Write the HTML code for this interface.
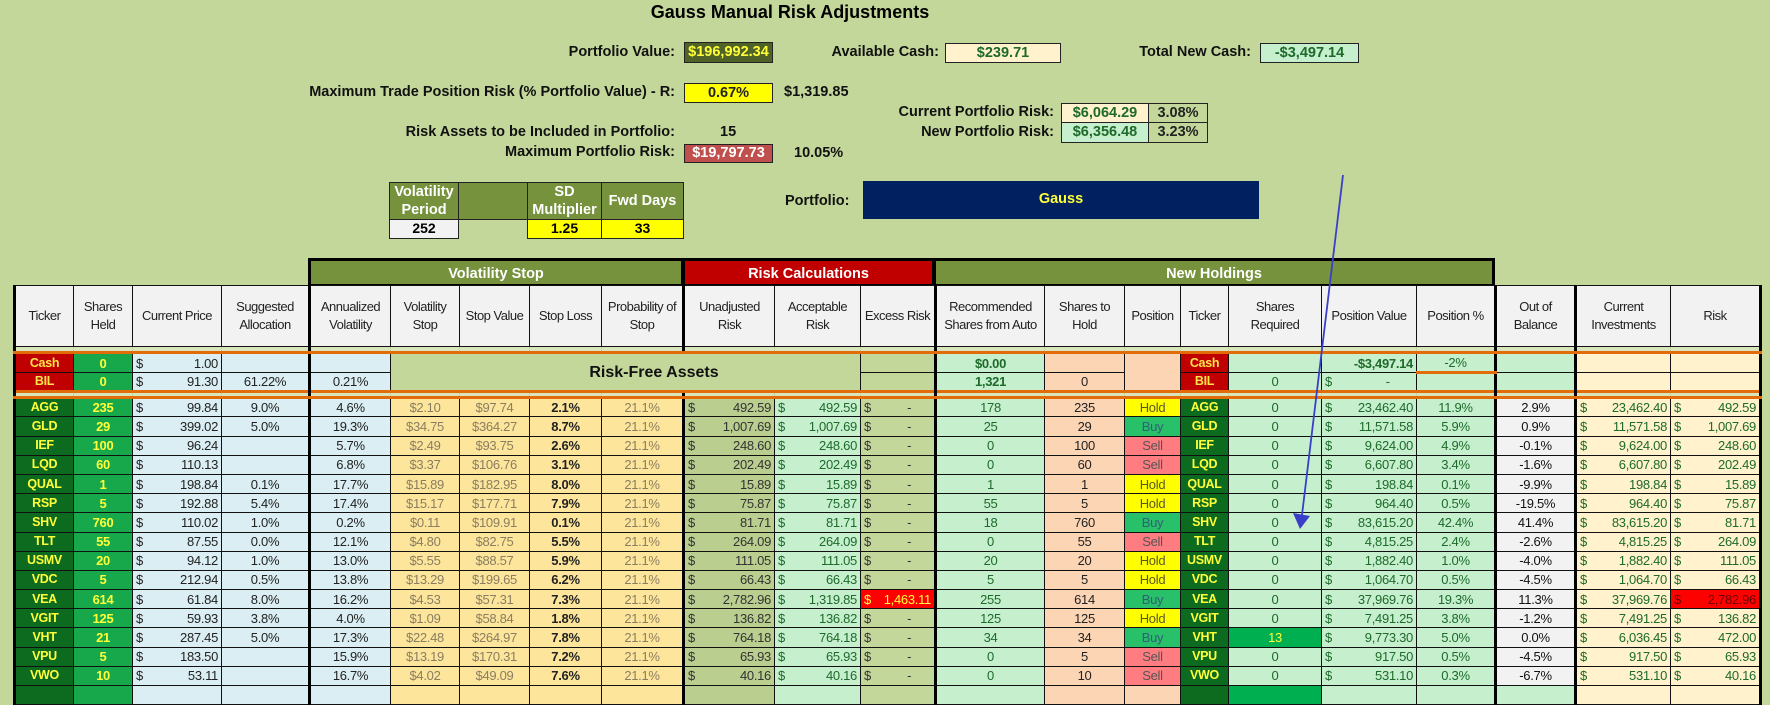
<!DOCTYPE html>
<html><head><meta charset="utf-8"><style>
*{box-sizing:border-box;margin:0;padding:0}
body{width:1770px;height:689px;overflow:hidden;background:#c4d79b;font-family:"Liberation Sans",sans-serif;position:relative}
.a{position:absolute;white-space:nowrap}
.lb{font-weight:bold;font-size:14.5px;color:#111;text-align:right}
.bx{border:1px solid #222;text-align:center;font-weight:bold;font-size:14.5px;line-height:19px}
table{position:absolute;left:13px;top:285px;border-collapse:collapse;table-layout:fixed;font-family:"Liberation Sans",sans-serif;font-size:13px;letter-spacing:-0.3px}
td{border:1px solid #111;text-align:center;white-space:nowrap;overflow:hidden;padding:0 3px;line-height:17px}
tr.h td{background:#f2f2f2;height:61px;line-height:18px;font-size:13px;letter-spacing:-0.5px;color:#222;padding:0 1px}
tr.r td{height:19.2px}
tr.s td{height:6px;background:#d8e4bc;border-top:none;border-bottom:3px solid #e26b0a;border-left-color:transparent;border-right-color:transparent}
td.tk{background:#0d6b1f;color:#ffff3a;font-weight:bold;font-size:12.5px;padding:0 1px}
td.tr{background:#c00000;color:#ffe54a;font-weight:bold;font-size:12.5px}
td.sh{background:#16a84a;color:#ffff3a;font-weight:bold}
td.lb2{background:#daeef3;color:#222}
td.or{background:#fde69c;color:#8a7d60}
td.orb{background:#fde69c;color:#222;font-weight:bold}
td.ol{background:#b9ce8f;color:#333}
td.gr{background:#c6efce;color:#1d6a2a}
td.ex{background:#c4d79b;color:#333}
td.pe{background:#fcd5b4;color:#222}
td.ho{background:#ffff00;color:#5a5a20}
td.bu{background:#28c068;color:#31607a}
td.se{background:#ff7c80;color:#555}
td.ob{background:#f2f2f2;color:#111}
td.cr{background:#fff2cc;color:#1d6a2a}
td.rd{background:#ff0000;color:#6a0000}
td.rdy{background:#ff0000;color:#ffff3a}
td.gb{background:#00b050;color:#ffff3a}
td.d{text-align:right}
td.d i{float:left;font-style:normal}
.T{border-left:3px solid #000!important}
.TR{border-right:3px solid #000!important}
.g{position:absolute;top:258px;height:27px;color:#fff;font-weight:bold;font-size:14.5px;text-align:center;line-height:26px;border:3px solid #000;border-bottom:1px solid #000}
</style></head><body>
<div class="a" style="left:0;width:1580px;top:2px;text-align:center;font-weight:bold;font-size:18px;color:#000">Gauss Manual Risk Adjustments</div>

<div class="a lb" style="right:1095px;top:44px">Portfolio Value:</div>
<div class="a bx" style="left:684px;top:42px;width:89px;height:21px;background:#4f6228;color:#ffff3a">$196,992.34</div>
<div class="a lb" style="right:831px;top:44px">Available Cash:</div>
<div class="a bx" style="left:945px;top:43px;width:116px;height:20px;background:#fff2cc;color:#1d6a2a">$239.71</div>
<div class="a lb" style="right:519px;top:44px">Total New Cash:</div>
<div class="a bx" style="left:1260px;top:43px;width:99px;height:20px;background:#c6efce;color:#1d6a2a">-$3,497.14</div>

<div class="a lb" style="right:1095px;top:84px">Maximum Trade Position Risk (% Portfolio Value) - R:</div>
<div class="a bx" style="left:684px;top:83px;width:89px;height:20px;background:#ffff00;color:#222">0.67%</div>
<div class="a lb" style="left:784px;top:84px">$1,319.85</div>

<div class="a lb" style="right:716px;top:104px">Current Portfolio Risk:</div>
<div class="a lb" style="right:716px;top:124px">New Portfolio Risk:</div>
<div class="a bx" style="left:1061px;top:103px;width:88px;height:20px;background:#fff2cc;color:#1d6a2a">$6,064.29</div>
<div class="a bx" style="left:1148px;top:103px;width:60px;height:20px;color:#222">3.08%</div>
<div class="a bx" style="left:1061px;top:122px;width:88px;height:21px;background:#c6efce;color:#1d6a2a">$6,356.48</div>
<div class="a bx" style="left:1148px;top:122px;width:60px;height:21px;color:#222">3.23%</div>

<div class="a lb" style="right:1095px;top:124px">Risk Assets to be Included in Portfolio:</div>
<div class="a lb" style="left:720px;top:124px">15</div>
<div class="a lb" style="right:1095px;top:144px">Maximum Portfolio Risk:</div>
<div class="a bx" style="left:684px;top:144px;width:89px;height:19px;background:#c0504d;color:#fff;line-height:17px">$19,797.73</div>
<div class="a lb" style="left:794px;top:145px">10.05%</div>

<div class="a" style="left:389px;top:182px;width:295px;height:57px;font-weight:bold;font-size:14.5px">
<div class="a" style="left:0;top:0;width:70px;height:38px;background:#76923c;color:#fff;border:1px solid #222;text-align:center;line-height:18px">Volatility<br>Period</div>
<div class="a" style="left:69px;top:0;width:70px;height:38px;background:#76923c;border:1px solid #222"></div>
<div class="a" style="left:138px;top:0;width:75px;height:38px;background:#76923c;color:#fff;border:1px solid #222;text-align:center;line-height:18px">SD<br>Multiplier</div>
<div class="a" style="left:212px;top:0;width:83px;height:38px;background:#76923c;color:#fff;border:1px solid #222;text-align:center;line-height:36px">Fwd Days</div>
<div class="a" style="left:0;top:37px;width:70px;height:20px;background:#f2f2f2;border:1px solid #222;text-align:center;font-size:14px">252</div>
<div class="a" style="left:138px;top:37px;width:75px;height:20px;background:#ffff00;border:1px solid #222;text-align:center;font-size:14px">1.25</div>
<div class="a" style="left:212px;top:37px;width:83px;height:20px;background:#ffff00;border:1px solid #222;text-align:center;font-size:14px">33</div>
</div>

<div class="a lb" style="left:785px;top:193px">Portfolio:</div>
<div class="a" style="left:863px;top:181px;width:396px;height:38px;background:#002060;color:#ffff3a;font-weight:bold;font-size:14.5px;text-align:center;line-height:37px">Gauss</div>

<div class="g" style="left:308px;width:376px;background:#76923c">Volatility Stop</div>
<div class="g" style="left:682px;width:253px;background:#c00000">Risk Calculations</div>
<div class="g" style="left:933px;width:562px;background:#76923c">New Holdings</div>

<table style="width:1746px">
<colgroup><col style="width:59px"><col style="width:59px"><col style="width:89px"><col style="width:88px"><col style="width:81px"><col style="width:69px"><col style="width:70px"><col style="width:72px"><col style="width:82px"><col style="width:91px"><col style="width:86px"><col style="width:75px"><col style="width:109px"><col style="width:80px"><col style="width:56px"><col style="width:48px"><col style="width:93px"><col style="width:95px"><col style="width:79px"><col style="width:80px"><col style="width:95px"><col style="width:90px"></colgroup>
<tr class="h"><td class="T">Ticker</td><td>Shares<br>Held</td><td>Current Price</td><td>Suggested<br>Allocation</td><td class="T">Annualized<br>Volatility</td><td>Volatility<br>Stop</td><td>Stop Value</td><td>Stop Loss</td><td>Probability of<br>Stop</td><td class="T">Unadjusted<br>Risk</td><td>Acceptable<br>Risk</td><td>Excess Risk</td><td class="T">Recommended<br>Shares from Auto</td><td>Shares to<br>Hold</td><td>Position</td><td>Ticker</td><td>Shares<br>Required</td><td>Position Value</td><td>Position %</td><td class="T">Out of<br>Balance</td><td class="T">Current<br>Investments</td><td class="TR">Risk</td></tr>
<tr class="s"><td class="T"></td><td></td><td></td><td></td><td class="T"></td><td></td><td></td><td></td><td></td><td class="T"></td><td></td><td></td><td class="T"></td><td></td><td></td><td></td><td></td><td></td><td></td><td class="T"></td><td class="T"></td><td class="TR"></td></tr>
<tr class="r"><td class="tr T">Cash</td><td class="sh">0</td><td class="lb2 d"><i>$</i>1.00</td><td class="lb2"></td><td class="lb2 T"></td><td colspan="6" rowspan="2" class="ex" style="font-weight:bold;font-size:16px;color:#111;text-align:center;padding-left:60px;letter-spacing:0">Risk-Free Assets</td><td class="ex"></td><td class="gr T" style="font-weight:bold">$0.00</td><td class="pe"></td><td class="pe" rowspan="2"></td><td class="tr">Cash</td><td class="gr"></td><td class="gr d" style="font-weight:bold">-$3,497.14</td><td class="gr" style="border-bottom:3px solid #e26b0a">-2%</td><td class="gr T"></td><td class="cr T"></td><td class="cr TR"></td></tr>
<tr class="r"><td class="tr T">BIL</td><td class="sh">0</td><td class="lb2 d"><i>$</i>91.30</td><td class="lb2">61.22%</td><td class="lb2 T">0.21%</td><td class="ex"></td><td class="gr T" style="font-weight:bold">1,321</td><td class="pe">0</td><td class="tr">BIL</td><td class="gr">0</td><td class="gr d"><i>$</i>-&nbsp;&nbsp;&nbsp;&nbsp;&nbsp;&nbsp;&nbsp;</td><td class="gr"></td><td class="gr T"></td><td class="cr T"></td><td class="cr TR"></td></tr>
<tr class="s"><td class="T" style="border-top:3px solid #e26b0a"></td><td style="border-top:3px solid #e26b0a"></td><td style="border-top:3px solid #e26b0a"></td><td style="border-top:3px solid #e26b0a"></td><td class="T" style="border-top:3px solid #e26b0a"></td><td style="border-top:3px solid #e26b0a"></td><td style="border-top:3px solid #e26b0a"></td><td style="border-top:3px solid #e26b0a"></td><td style="border-top:3px solid #e26b0a"></td><td class="T" style="border-top:3px solid #e26b0a"></td><td style="border-top:3px solid #e26b0a"></td><td style="border-top:3px solid #e26b0a"></td><td class="T" style="border-top:3px solid #e26b0a"></td><td style="border-top:3px solid #e26b0a"></td><td style="border-top:3px solid #e26b0a"></td><td style="border-top:3px solid #e26b0a"></td><td style="border-top:3px solid #e26b0a"></td><td style="border-top:3px solid #e26b0a"></td><td style="border-top:3px solid #e26b0a"></td><td class="T" style="border-top:3px solid #e26b0a"></td><td class="T" style="border-top:3px solid #e26b0a"></td><td class="TR" style="border-top:3px solid #e26b0a"></td></tr>
<tr class="r"><td class="tk T">AGG</td><td class="sh">235</td><td class="lb2 d"><i>$</i>99.84</td><td class="lb2">9.0%</td><td class="lb2 T">4.6%</td><td class="or">$2.10</td><td class="or">$97.74</td><td class="orb">2.1%</td><td class="or">21.1%</td><td class="ol d T"><i>$</i>492.59</td><td class="gr d"><i>$</i>492.59</td><td class="ex d"><i>$</i>-&nbsp;&nbsp;&nbsp;&nbsp;&nbsp;&nbsp;</td><td class="gr T">178</td><td class="pe">235</td><td class="ho">Hold</td><td class="tk">AGG</td><td class="gr">0</td><td class="gr d"><i>$</i>23,462.40</td><td class="gr">11.9%</td><td class="ob T">2.9%</td><td class="cr d T"><i>$</i>23,462.40</td><td class="cr d TR"><i>$</i>492.59</td></tr>
<tr class="r"><td class="tk T">GLD</td><td class="sh">29</td><td class="lb2 d"><i>$</i>399.02</td><td class="lb2">5.0%</td><td class="lb2 T">19.3%</td><td class="or">$34.75</td><td class="or">$364.27</td><td class="orb">8.7%</td><td class="or">21.1%</td><td class="ol d T"><i>$</i>1,007.69</td><td class="gr d"><i>$</i>1,007.69</td><td class="ex d"><i>$</i>-&nbsp;&nbsp;&nbsp;&nbsp;&nbsp;&nbsp;</td><td class="gr T">25</td><td class="pe">29</td><td class="bu">Buy</td><td class="tk">GLD</td><td class="gr">0</td><td class="gr d"><i>$</i>11,571.58</td><td class="gr">5.9%</td><td class="ob T">0.9%</td><td class="cr d T"><i>$</i>11,571.58</td><td class="cr d TR"><i>$</i>1,007.69</td></tr>
<tr class="r"><td class="tk T">IEF</td><td class="sh">100</td><td class="lb2 d"><i>$</i>96.24</td><td class="lb2"></td><td class="lb2 T">5.7%</td><td class="or">$2.49</td><td class="or">$93.75</td><td class="orb">2.6%</td><td class="or">21.1%</td><td class="ol d T"><i>$</i>248.60</td><td class="gr d"><i>$</i>248.60</td><td class="ex d"><i>$</i>-&nbsp;&nbsp;&nbsp;&nbsp;&nbsp;&nbsp;</td><td class="gr T">0</td><td class="pe">100</td><td class="se">Sell</td><td class="tk">IEF</td><td class="gr">0</td><td class="gr d"><i>$</i>9,624.00</td><td class="gr">4.9%</td><td class="ob T">-0.1%</td><td class="cr d T"><i>$</i>9,624.00</td><td class="cr d TR"><i>$</i>248.60</td></tr>
<tr class="r"><td class="tk T">LQD</td><td class="sh">60</td><td class="lb2 d"><i>$</i>110.13</td><td class="lb2"></td><td class="lb2 T">6.8%</td><td class="or">$3.37</td><td class="or">$106.76</td><td class="orb">3.1%</td><td class="or">21.1%</td><td class="ol d T"><i>$</i>202.49</td><td class="gr d"><i>$</i>202.49</td><td class="ex d"><i>$</i>-&nbsp;&nbsp;&nbsp;&nbsp;&nbsp;&nbsp;</td><td class="gr T">0</td><td class="pe">60</td><td class="se">Sell</td><td class="tk">LQD</td><td class="gr">0</td><td class="gr d"><i>$</i>6,607.80</td><td class="gr">3.4%</td><td class="ob T">-1.6%</td><td class="cr d T"><i>$</i>6,607.80</td><td class="cr d TR"><i>$</i>202.49</td></tr>
<tr class="r"><td class="tk T">QUAL</td><td class="sh">1</td><td class="lb2 d"><i>$</i>198.84</td><td class="lb2">0.1%</td><td class="lb2 T">17.7%</td><td class="or">$15.89</td><td class="or">$182.95</td><td class="orb">8.0%</td><td class="or">21.1%</td><td class="ol d T"><i>$</i>15.89</td><td class="gr d"><i>$</i>15.89</td><td class="ex d"><i>$</i>-&nbsp;&nbsp;&nbsp;&nbsp;&nbsp;&nbsp;</td><td class="gr T">1</td><td class="pe">1</td><td class="ho">Hold</td><td class="tk">QUAL</td><td class="gr">0</td><td class="gr d"><i>$</i>198.84</td><td class="gr">0.1%</td><td class="ob T">-9.9%</td><td class="cr d T"><i>$</i>198.84</td><td class="cr d TR"><i>$</i>15.89</td></tr>
<tr class="r"><td class="tk T">RSP</td><td class="sh">5</td><td class="lb2 d"><i>$</i>192.88</td><td class="lb2">5.4%</td><td class="lb2 T">17.4%</td><td class="or">$15.17</td><td class="or">$177.71</td><td class="orb">7.9%</td><td class="or">21.1%</td><td class="ol d T"><i>$</i>75.87</td><td class="gr d"><i>$</i>75.87</td><td class="ex d"><i>$</i>-&nbsp;&nbsp;&nbsp;&nbsp;&nbsp;&nbsp;</td><td class="gr T">55</td><td class="pe">5</td><td class="ho">Hold</td><td class="tk">RSP</td><td class="gr">0</td><td class="gr d"><i>$</i>964.40</td><td class="gr">0.5%</td><td class="ob T">-19.5%</td><td class="cr d T"><i>$</i>964.40</td><td class="cr d TR"><i>$</i>75.87</td></tr>
<tr class="r"><td class="tk T">SHV</td><td class="sh">760</td><td class="lb2 d"><i>$</i>110.02</td><td class="lb2">1.0%</td><td class="lb2 T">0.2%</td><td class="or">$0.11</td><td class="or">$109.91</td><td class="orb">0.1%</td><td class="or">21.1%</td><td class="ol d T"><i>$</i>81.71</td><td class="gr d"><i>$</i>81.71</td><td class="ex d"><i>$</i>-&nbsp;&nbsp;&nbsp;&nbsp;&nbsp;&nbsp;</td><td class="gr T">18</td><td class="pe">760</td><td class="bu">Buy</td><td class="tk">SHV</td><td class="gr">0</td><td class="gr d"><i>$</i>83,615.20</td><td class="gr">42.4%</td><td class="ob T">41.4%</td><td class="cr d T"><i>$</i>83,615.20</td><td class="cr d TR"><i>$</i>81.71</td></tr>
<tr class="r"><td class="tk T">TLT</td><td class="sh">55</td><td class="lb2 d"><i>$</i>87.55</td><td class="lb2">0.0%</td><td class="lb2 T">12.1%</td><td class="or">$4.80</td><td class="or">$82.75</td><td class="orb">5.5%</td><td class="or">21.1%</td><td class="ol d T"><i>$</i>264.09</td><td class="gr d"><i>$</i>264.09</td><td class="ex d"><i>$</i>-&nbsp;&nbsp;&nbsp;&nbsp;&nbsp;&nbsp;</td><td class="gr T">0</td><td class="pe">55</td><td class="se">Sell</td><td class="tk">TLT</td><td class="gr">0</td><td class="gr d"><i>$</i>4,815.25</td><td class="gr">2.4%</td><td class="ob T">-2.6%</td><td class="cr d T"><i>$</i>4,815.25</td><td class="cr d TR"><i>$</i>264.09</td></tr>
<tr class="r"><td class="tk T">USMV</td><td class="sh">20</td><td class="lb2 d"><i>$</i>94.12</td><td class="lb2">1.0%</td><td class="lb2 T">13.0%</td><td class="or">$5.55</td><td class="or">$88.57</td><td class="orb">5.9%</td><td class="or">21.1%</td><td class="ol d T"><i>$</i>111.05</td><td class="gr d"><i>$</i>111.05</td><td class="ex d"><i>$</i>-&nbsp;&nbsp;&nbsp;&nbsp;&nbsp;&nbsp;</td><td class="gr T">20</td><td class="pe">20</td><td class="ho">Hold</td><td class="tk">USMV</td><td class="gr">0</td><td class="gr d"><i>$</i>1,882.40</td><td class="gr">1.0%</td><td class="ob T">-4.0%</td><td class="cr d T"><i>$</i>1,882.40</td><td class="cr d TR"><i>$</i>111.05</td></tr>
<tr class="r"><td class="tk T">VDC</td><td class="sh">5</td><td class="lb2 d"><i>$</i>212.94</td><td class="lb2">0.5%</td><td class="lb2 T">13.8%</td><td class="or">$13.29</td><td class="or">$199.65</td><td class="orb">6.2%</td><td class="or">21.1%</td><td class="ol d T"><i>$</i>66.43</td><td class="gr d"><i>$</i>66.43</td><td class="ex d"><i>$</i>-&nbsp;&nbsp;&nbsp;&nbsp;&nbsp;&nbsp;</td><td class="gr T">5</td><td class="pe">5</td><td class="ho">Hold</td><td class="tk">VDC</td><td class="gr">0</td><td class="gr d"><i>$</i>1,064.70</td><td class="gr">0.5%</td><td class="ob T">-4.5%</td><td class="cr d T"><i>$</i>1,064.70</td><td class="cr d TR"><i>$</i>66.43</td></tr>
<tr class="r"><td class="tk T">VEA</td><td class="sh">614</td><td class="lb2 d"><i>$</i>61.84</td><td class="lb2">8.0%</td><td class="lb2 T">16.2%</td><td class="or">$4.53</td><td class="or">$57.31</td><td class="orb">7.3%</td><td class="or">21.1%</td><td class="ol d T"><i>$</i>2,782.96</td><td class="gr d"><i>$</i>1,319.85</td><td class="rdy d"><i>$</i>1,463.11</td><td class="gr T">255</td><td class="pe">614</td><td class="bu">Buy</td><td class="tk">VEA</td><td class="gr">0</td><td class="gr d"><i>$</i>37,969.76</td><td class="gr">19.3%</td><td class="ob T">11.3%</td><td class="cr d T"><i>$</i>37,969.76</td><td class="rd d TR"><i>$</i>2,782.96</td></tr>
<tr class="r"><td class="tk T">VGIT</td><td class="sh">125</td><td class="lb2 d"><i>$</i>59.93</td><td class="lb2">3.8%</td><td class="lb2 T">4.0%</td><td class="or">$1.09</td><td class="or">$58.84</td><td class="orb">1.8%</td><td class="or">21.1%</td><td class="ol d T"><i>$</i>136.82</td><td class="gr d"><i>$</i>136.82</td><td class="ex d"><i>$</i>-&nbsp;&nbsp;&nbsp;&nbsp;&nbsp;&nbsp;</td><td class="gr T">125</td><td class="pe">125</td><td class="ho">Hold</td><td class="tk">VGIT</td><td class="gr">0</td><td class="gr d"><i>$</i>7,491.25</td><td class="gr">3.8%</td><td class="ob T">-1.2%</td><td class="cr d T"><i>$</i>7,491.25</td><td class="cr d TR"><i>$</i>136.82</td></tr>
<tr class="r"><td class="tk T">VHT</td><td class="sh">21</td><td class="lb2 d"><i>$</i>287.45</td><td class="lb2">5.0%</td><td class="lb2 T">17.3%</td><td class="or">$22.48</td><td class="or">$264.97</td><td class="orb">7.8%</td><td class="or">21.1%</td><td class="ol d T"><i>$</i>764.18</td><td class="gr d"><i>$</i>764.18</td><td class="ex d"><i>$</i>-&nbsp;&nbsp;&nbsp;&nbsp;&nbsp;&nbsp;</td><td class="gr T">34</td><td class="pe">34</td><td class="bu">Buy</td><td class="tk">VHT</td><td class="gb">13</td><td class="gr d"><i>$</i>9,773.30</td><td class="gr">5.0%</td><td class="ob T">0.0%</td><td class="cr d T"><i>$</i>6,036.45</td><td class="cr d TR"><i>$</i>472.00</td></tr>
<tr class="r"><td class="tk T">VPU</td><td class="sh">5</td><td class="lb2 d"><i>$</i>183.50</td><td class="lb2"></td><td class="lb2 T">15.9%</td><td class="or">$13.19</td><td class="or">$170.31</td><td class="orb">7.2%</td><td class="or">21.1%</td><td class="ol d T"><i>$</i>65.93</td><td class="gr d"><i>$</i>65.93</td><td class="ex d"><i>$</i>-&nbsp;&nbsp;&nbsp;&nbsp;&nbsp;&nbsp;</td><td class="gr T">0</td><td class="pe">5</td><td class="se">Sell</td><td class="tk">VPU</td><td class="gr">0</td><td class="gr d"><i>$</i>917.50</td><td class="gr">0.5%</td><td class="ob T">-4.5%</td><td class="cr d T"><i>$</i>917.50</td><td class="cr d TR"><i>$</i>65.93</td></tr>
<tr class="r"><td class="tk T">VWO</td><td class="sh">10</td><td class="lb2 d"><i>$</i>53.11</td><td class="lb2"></td><td class="lb2 T">16.7%</td><td class="or">$4.02</td><td class="or">$49.09</td><td class="orb">7.6%</td><td class="or">21.1%</td><td class="ol d T"><i>$</i>40.16</td><td class="gr d"><i>$</i>40.16</td><td class="ex d"><i>$</i>-&nbsp;&nbsp;&nbsp;&nbsp;&nbsp;&nbsp;</td><td class="gr T">0</td><td class="pe">10</td><td class="se">Sell</td><td class="tk">VWO</td><td class="gr">0</td><td class="gr d"><i>$</i>531.10</td><td class="gr">0.3%</td><td class="ob T">-6.7%</td><td class="cr d T"><i>$</i>531.10</td><td class="cr d TR"><i>$</i>40.16</td></tr>
<tr class="r"><td class="tk T">&nbsp;</td><td class="sh"></td><td class="lb2"></td><td class="lb2"></td><td class="lb2 T"></td><td class="or"></td><td class="or"></td><td class="or"></td><td class="or"></td><td class="ol T"></td><td class="gr"></td><td class="ex"></td><td class="gr T"></td><td class="pe"></td><td class="pe"></td><td class="tk"></td><td class="gb"></td><td class="gr"></td><td class="gr"></td><td class="gr T"></td><td class="cr T"></td><td class="cr TR"></td></tr>
</table>

<svg class="a" style="left:0;top:0" width="1770" height="689"><line x1="1343" y1="175" x2="1302" y2="515" stroke="#3a3fc8" stroke-width="1.8"/><polygon points="1293,513 1310,516 1300,529" fill="#3a3fc8"/></svg>
</body></html>
